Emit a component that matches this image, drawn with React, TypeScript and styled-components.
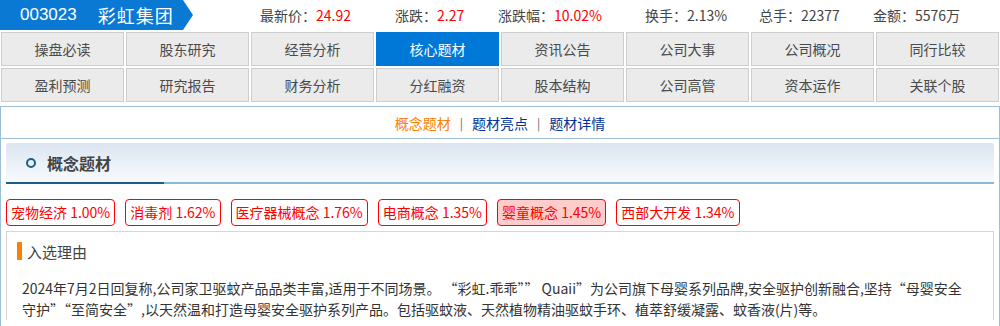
import React from 'react'
import styled, { createGlobalStyle } from 'styled-components'

const GlobalStyle = createGlobalStyle`
  body {
    margin: 0;
    background: #fff;
    font-family: "Noto Sans CJK SC", "Noto Sans", sans-serif;
    color: #444;
  }
`

const Page = styled.div`
  width: 1000px;
`

const Header = styled.div`
  display: flex;
  align-items: center;
  height: 30px;
`

const Banner = styled.div`
  display: flex;
  align-items: center;
  width: 193px;
  height: 30px;
  background: #0a79d4;
  color: #fff;
  clip-path: polygon(0 0, 183px 0, 193px 50%, 183px 100%, 0 100%);
`

const Code = styled.span`
  margin-left: 20px;
  font-family: "Liberation Sans", Arial, sans-serif;
  font-size: 17px;
`

const Name = styled.span`
  margin-left: 21px;
  font-size: 18px;
  letter-spacing: 1px;
`

const Stats = styled.div`
  display: flex;
  margin-left: 67px;
  font-size: 14px;
`

const Stat = styled.div<{ $w: number }>`
  width: ${p => p.$w}px;
  white-space: nowrap;
  color: #444;
  span {
    color: #f00;
  }
`

const Nav = styled.div`
  display: grid;
  grid-template-columns: repeat(8, 123px);
  grid-auto-rows: 34px;
  gap: 2px;
  padding-left: 1px;
  margin-top: 2px;
`

const NavCell = styled.div<{ $active?: boolean }>`
  box-sizing: border-box;
  display: flex;
  align-items: center;
  justify-content: center;
  font-size: 14px;
  border: 1px solid ${p => (p.$active ? '#0078d7' : '#cdcdcd')};
  background: ${p => (p.$active ? '#0078d7' : '#ebebeb')};
  color: ${p => (p.$active ? '#fff' : '#4a4a4a')};
`

const Panel = styled.div`
  box-sizing: border-box;
  width: 1000px;
  margin-top: 4px;
  border: 1px solid #9cbed8;
  border-bottom: none;
  height: 220px;
`

const SubNav = styled.div`
  display: flex;
  align-items: center;
  justify-content: center;
  gap: 9px;
  height: 31px;
  border-bottom: 1px solid #9cbed8;
  font-size: 14px;
`

const SubLink = styled.span<{ $active?: boolean }>`
  color: ${p => (p.$active ? '#ff7f00' : '#003399')};
`

const Sep = styled.span`
  color: #666;
  font-size: 12px;
`

const SectionHead = styled.div`
  display: flex;
  align-items: center;
  height: 39px;
  margin: 4px 5px 0 5px;
  padding-bottom: 2px;
  border-radius: 3px 3px 0 0;
  background:
    linear-gradient(#1b5e8a, #1b5e8a) left bottom / 158px 2px no-repeat,
    linear-gradient(#8db8d4, #8db8d4) left bottom / 100% 2px no-repeat,
    linear-gradient(to bottom, #dbe5f1, #fafcfe);
`

const Ring = styled.span`
  box-sizing: border-box;
  width: 10px;
  height: 10px;
  margin-left: 20px;
  border: 2px solid #1b5e8a;
  border-radius: 50%;
`

const SectionTitle = styled.span`
  margin-left: 11px;
  font-size: 16px;
  font-weight: bold;
  color: #444;
`

const Tags = styled.div`
  display: flex;
  gap: 10px;
  margin-top: 15px;
  padding-left: 5px;
`

const Tag = styled.div<{ $hot?: boolean }>`
  box-sizing: border-box;
  height: 27px;
  line-height: 25px;
  padding: 0 4px;
  border: 1px solid #f00;
  border-radius: 4px;
  background: ${p => (p.$hot ? '#ffcccc' : '#fff')};
  color: #f00;
  font-size: 14px;
  white-space: nowrap;
`

const ReasonBox = styled.div`
  margin: 5px 5px 0 5px;
  border: 1px solid #d6d6d6;
  border-bottom: none;
  padding: 10px 22px 0 15px;
`

const ReasonHead = styled.div`
  display: flex;
  align-items: center;
  margin-left: -5px;
  height: 18px;
  font-size: 15px;
  color: #444;
  &::before {
    content: '';
    width: 5px;
    height: 18px;
    margin-right: 5px;
    background: #ff8000;
  }
`

const Reason = styled.p`
  margin: 18px 0 0;
  font-size: 14px;
  line-height: 21px;
  color: #333;
`

const stats = [
  { label: '最新价：', value: '24.92', w: 135 },
  { label: '涨跌：', value: '2.27', w: 103 },
  { label: '涨跌幅：', value: '10.02%', w: 147 },
  { label: '换手：', value: '2.13%', w: 114, plain: true },
  { label: '总手：', value: '22377', w: 114, plain: true },
  { label: '金额：', value: '5576万', w: 120, plain: true },
]

const navItems = [
  '操盘必读', '股东研究', '经营分析', '核心题材', '资讯公告', '公司大事', '公司概况', '同行比较',
  '盈利预测', '研究报告', '财务分析', '分红融资', '股本结构', '公司高管', '资本运作', '关联个股',
]

const tags = [
  { name: '宠物经济', pct: '1.00%' },
  { name: '消毒剂', pct: '1.62%' },
  { name: '医疗器械概念', pct: '1.76%' },
  { name: '电商概念', pct: '1.35%' },
  { name: '婴童概念', pct: '1.45%', hot: true },
  { name: '西部大开发', pct: '1.34%' },
]

export default function App() {
  return (
    <Page>
      <GlobalStyle />
      <Header>
        <Banner>
          <Code>003023</Code>
          <Name>彩虹集团</Name>
        </Banner>
        <Stats>
          {stats.map(s => (
            <Stat key={s.label} $w={s.w}>
              {s.label}
              {s.plain ? s.value : <span>{s.value}</span>}
            </Stat>
          ))}
        </Stats>
      </Header>

      <Nav>
        {navItems.map(n => (
          <NavCell key={n} $active={n === '核心题材'}>{n}</NavCell>
        ))}
      </Nav>

      <Panel>
        <SubNav>
          <SubLink $active>概念题材</SubLink>
          <Sep>|</Sep>
          <SubLink>题材亮点</SubLink>
          <Sep>|</Sep>
          <SubLink>题材详情</SubLink>
        </SubNav>

        <SectionHead>
          <Ring />
          <SectionTitle>概念题材</SectionTitle>
        </SectionHead>

        <Tags>
          {tags.map(t => (
            <Tag key={t.name} $hot={t.hot}>{t.name} {t.pct}</Tag>
          ))}
        </Tags>

        <ReasonBox>
          <ReasonHead>入选理由</ReasonHead>
          <Reason>
            2024年7月2日回复称,公司家卫驱蚊产品品类丰富,适用于不同场景。 “彩虹.乖乖”” Quaii”为公司旗下母婴系列品牌,安全驱护创新融合,坚持“母婴安全守护”“至简安全”,以天然温和打造母婴安全驱护系列产品。包括驱蚊液、天然植物精油驱蚊手环、植萃舒缓凝露、蚊香液(片)等。
          </Reason>
        </ReasonBox>
      </Panel>
    </Page>
  )
}
